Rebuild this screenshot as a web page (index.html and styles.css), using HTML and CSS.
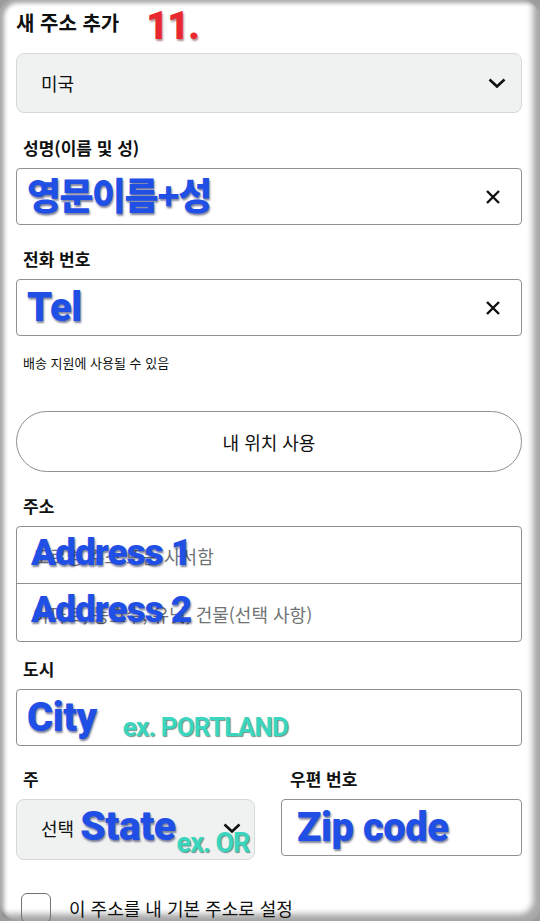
FILE: index.html
```html
<!DOCTYPE html>
<html lang="ko">
<head>
  <meta charset="UTF-8" />
  <meta name="viewport" content="width=device-width, initial-scale=1.0"/>
  <title>새 주소 추가</title>
  <link rel="stylesheet" href="styles.css">
</head>
<body>
  <div class="screen">
    <header class="title-row">
      <h1>새 주소 추가</h1>
      <span class="step">11.</span>
    </header>

    <div class="select country">
      <span>미국</span>
      <svg class="chevron" viewBox="0 0 18 10"><polyline points="1.5,1.5 9,8.5 16.5,1.5"/></svg>
    </div>

    <div class="field">
      <label>성명(이름 및 성)</label>
      <div class="input">
        <span class="note note-ko">영문이름+성</span>
        <svg class="clear" viewBox="0 0 16 16"><path d="M2 2 L14 14 M14 2 L2 14"/></svg>
      </div>
    </div>

    <div class="field phone">
      <label>전화 번호</label>
      <div class="input">
        <span class="note">Tel</span>
        <svg class="clear" viewBox="0 0 16 16"><path d="M2 2 L14 14 M14 2 L2 14"/></svg>
      </div>
    </div>
    <p class="hint">배송 지원에 사용될 수 있음</p>

    <button class="location-btn" type="button">내 위치 사용</button>

    <div class="field address">
      <label>주소</label>
      <div class="address-box">
        <div class="address-line">
          <span class="placeholder">도로명 주소 또는 사서함</span>
          <span class="note note-addr">Address 1</span>
        </div>
        <div class="address-line">
          <span class="placeholder">아파트, 동호수, 유닛, 건물(선택 사항)</span>
          <span class="note note-addr">Address 2</span>
        </div>
      </div>
    </div>

    <div class="field city">
      <label>도시</label>
      <div class="input">
        <span class="note">City</span>
        <span class="example">ex. PORTLAND</span>
      </div>
    </div>

    <div class="split">
      <div class="field">
        <label>주</label>
        <div class="select state">
          <span class="state-text">선택</span>
          <span class="note note-state">State</span>
          <span class="example example-or">ex. OR</span>
          <svg class="chevron" viewBox="0 0 18 10"><polyline points="1.5,1.5 9,8.5 16.5,1.5"/></svg>
        </div>
      </div>
      <div class="field">
        <label>우편 번호</label>
        <div class="input">
          <span class="note">Zip code</span>
        </div>
      </div>
    </div>

    <div class="default-row">
      <span class="checkbox"></span>
      <span>이 주소를 내 기본 주소로 설정</span>
    </div>
  </div>
</body>
</html>
```

FILE: styles.css
```css
html { background: #9c9c9c; }
body {
  margin: 0;
  font-family: "Noto Sans CJK KR", "Noto Sans", sans-serif;
  color: #0f1111;
}
.screen {
  height: 921px; box-sizing: border-box; overflow: hidden;
  background: #fff; border-radius: 14px;
  padding: 8px 18px 0 16px;
  box-shadow: inset 4px 3px 4px rgba(0, 0, 0, 0.35), inset -7px -7px 6px rgba(0, 0, 0, 0.35);
}

.title-row { display: flex; align-items: center; height: 30px; gap: 27px; }
.title-row h1 { margin: 0; font-size: 20px; font-weight: 700; line-height: 30px; }
.step {
  font-family: Roboto, "Liberation Sans", sans-serif;
  font-size: 38px; font-weight: 900; color: #e8272f;
  text-shadow: 1px 2px 2px rgba(80, 0, 0, 0.45);
  line-height: 30px; margin-top: 6px; letter-spacing: -1px;
}

.select {
  display: flex; align-items: center; box-sizing: border-box;
  background: #f0f2f2; border: 1px solid #d5d9d9; border-radius: 8px;
}
.country { height: 60px; margin-top: 15px; padding: 0 15px 0 24px; font-size: 18px; }
.country span { flex: 1; }
.chevron { width: 18px; height: 10px; flex: none; fill: none; stroke: #0f1111; stroke-width: 2.6; }

.field { display: flex; flex-direction: column; gap: 8px; margin-top: 23px; }
.field label { font-size: 17px; font-weight: 700; line-height: 24px; padding-left: 7px; }
.phone { margin-top: 22px; }
.address { margin-top: 22px; }
.city { margin-top: 15px; }

.input {
  display: flex; align-items: center; box-sizing: border-box;
  height: 57px; border: 1px solid #8d9191; border-radius: 4px;
  padding: 0 20px 0 10px; gap: 26px;
}
.input .note { flex: none; }
.clear { width: 16px; height: 16px; margin-left: auto; fill: none; stroke: #0f1111; stroke-width: 2.4; }

.note {
  font-family: Roboto, "Liberation Sans", sans-serif;
  font-size: 40px; font-weight: 900; color: #1f4fe4; line-height: 1;
  letter-spacing: -0.5px;
  text-shadow: 1px 2px 2px rgba(0, 10, 60, 0.5);
}
.note-ko {
  font-family: "Noto Sans CJK KR", sans-serif; font-weight: 900;
  font-size: 37px; letter-spacing: -1.5px; margin-top: -4px;
}
.example {
  font-family: Roboto, "Liberation Sans", sans-serif;
  font-size: 26px; font-weight: 700; color: #3bd6bf; line-height: 1;
  letter-spacing: -0.8px; align-self: flex-end; margin-bottom: 5px;
  text-shadow: 1px 1px 1px rgba(0, 60, 50, 0.55);
}

.hint { margin: 18px 0 0 7px; font-size: 13px; line-height: 18px; }

.location-btn {
  display: block; width: 100%; height: 61px; margin-top: 39px;
  background: #fff; border: 1px solid #8d9191; border-radius: 31px;
  font-family: inherit; font-size: 18px; color: #0f1111;
}

.address-box { border: 1px solid #8d9191; border-radius: 4px; }
.address-line {
  display: grid; align-items: center; height: 56px; padding-left: 14px;
}
.address-line + .address-line { border-top: 1px solid #8d9191; height: 57px; }
.address-line > span { grid-area: 1 / 1; }
.placeholder { font-size: 18px; color: #6f7373; padding-left: 2px; margin-top: 2px; }
.note-addr { font-size: 37px; letter-spacing: -1px; margin-top: -6px; }

.split { display: flex; gap: 26px; }
.split .field { flex: 1; margin-top: 21px; }
.split .field:first-child { flex: none; width: 239px; }
.split .field:last-child label { padding-left: 9px; }
.state { height: 61px; padding: 0 0 0 24px; font-size: 18px; }
.state-text { margin-right: 6px; margin-top: -4px; }
.note-state { font-size: 41px; margin-top: -6px; }
.example-or { font-size: 27px; margin-bottom: 2px; margin-left: 1px; letter-spacing: -1px; }
.state .chevron { margin-left: -26px; margin-top: -4px; }
.split .input { padding-left: 15px; }

.default-row { display: flex; align-items: center; gap: 18px; margin-top: 33px; padding-left: 5px; font-size: 18px; }
.checkbox {
  width: 28px; height: 28px; flex: none;
  border: 1px solid #6f7373; border-radius: 6px;
}
```
